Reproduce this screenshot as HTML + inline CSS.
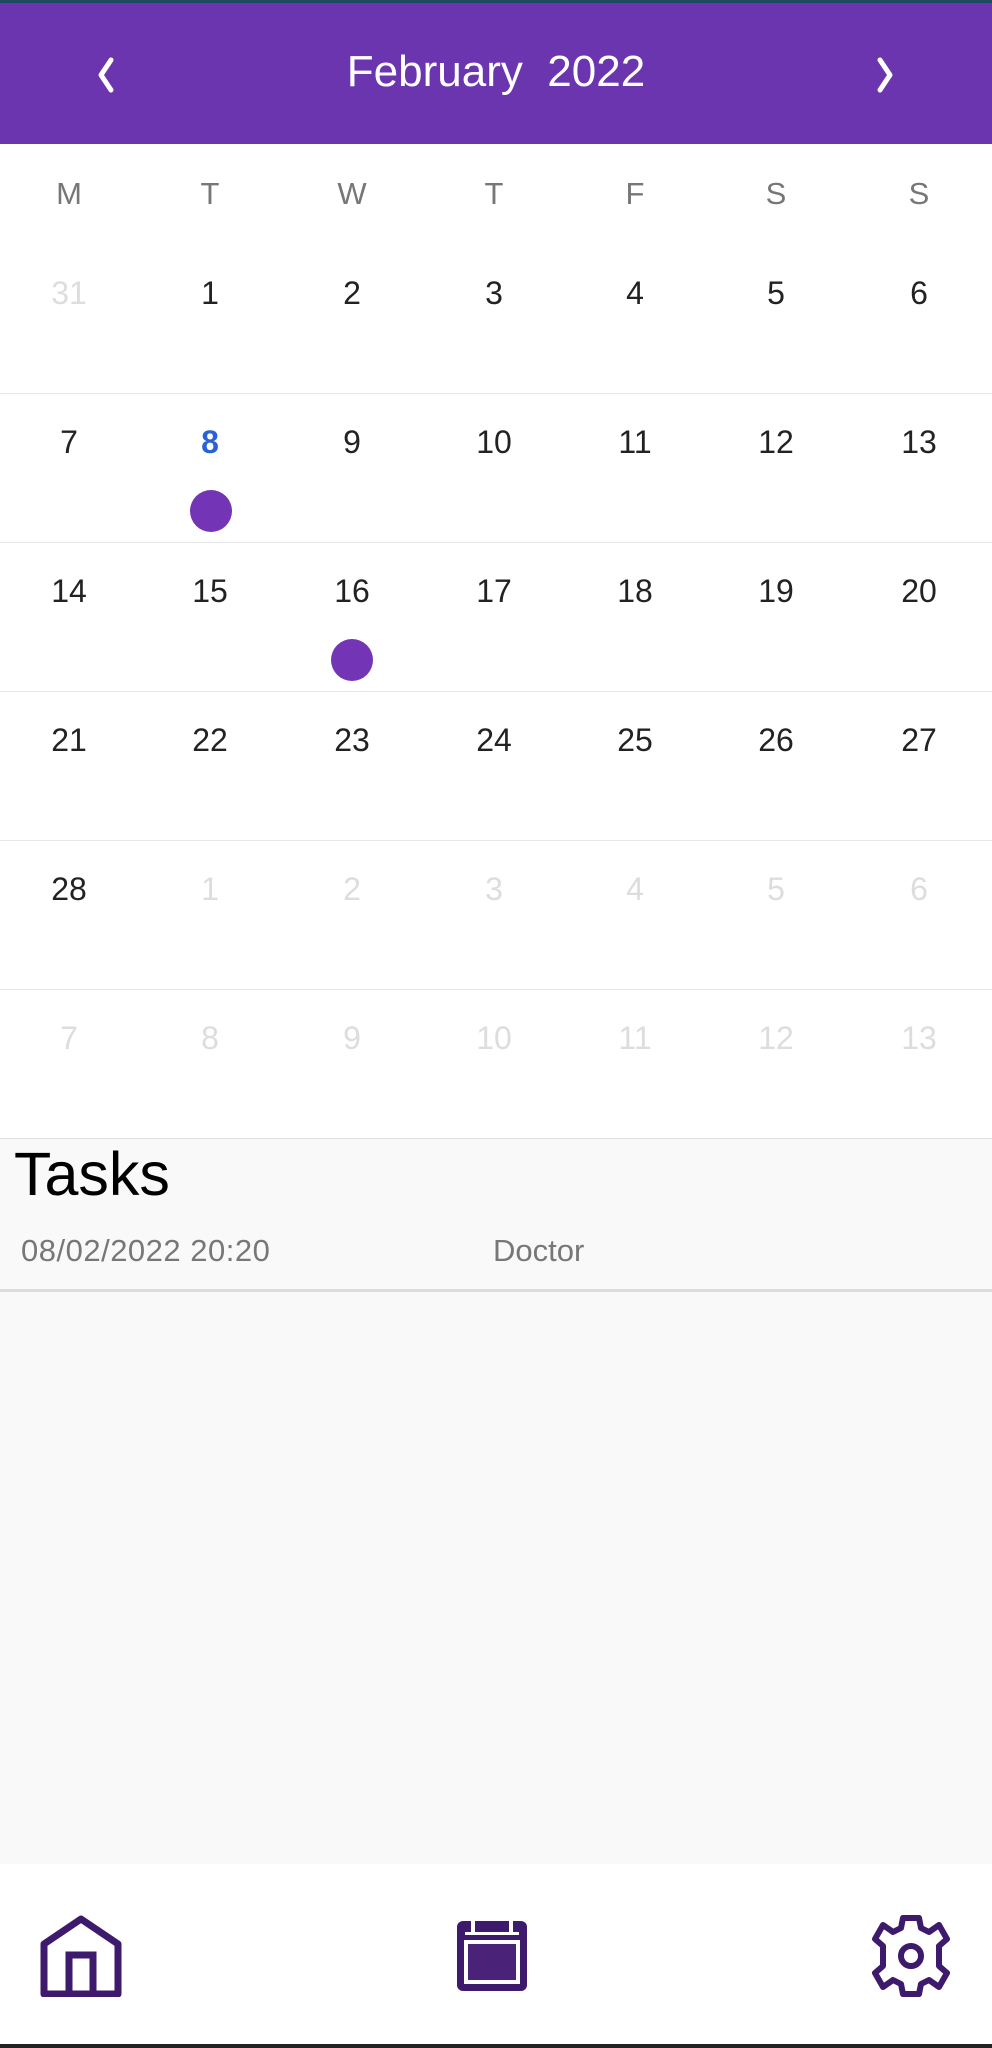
<!DOCTYPE html>
<html><head><meta charset="utf-8"><style>
*{margin:0;padding:0;box-sizing:border-box}
body{width:992px;height:2048px;background:#fff;font-family:"Liberation Sans",sans-serif;position:relative;overflow:hidden}
.top{position:absolute;left:0;top:0;width:992px;height:3px;background:#1c4a5e}
.hdr{position:absolute;left:0;top:3px;width:992px;height:141px;background:#6c35b0}
.title{position:absolute;left:0;width:992px;top:44px;text-align:center;color:#fff;font-size:44px;white-space:pre}
.wd,.num{position:absolute;width:142px;text-align:center;transform:translateX(-71px)}
.wd{top:176px;font-size:31px;color:#777}
.num{font-size:32px;color:#222}
.g{color:#ddd}
.line{position:absolute;left:0;width:992px;height:1px;background:#e6e6e6}
.dot{position:absolute;width:42px;height:42px;border-radius:50%;background:#7335b5}
.tasks{position:absolute;left:0;top:1139px;width:992px;height:725px;background:#f9f9f9}
.nav{position:absolute;left:0;top:1864px;width:992px;height:180px;background:#fff}
.bar{position:absolute;left:0;top:2044px;width:992px;height:4px;background:#222}
</style></head><body>
<div class="top"></div>
<div class="hdr">
<svg style="position:absolute;left:93px;top:52px" width="26" height="40" viewBox="0 0 26 40"><path d="M18 5 L8 20 L18 35" stroke="#fff" stroke-width="5" fill="none" stroke-linecap="round" stroke-linejoin="round"/></svg>
<div class="title">February  2022</div>
<svg style="position:absolute;left:872px;top:52px" width="26" height="40" viewBox="0 0 26 40"><path d="M8 5 L18 20 L8 35" stroke="#fff" stroke-width="5" fill="none" stroke-linecap="round" stroke-linejoin="round"/></svg>
</div>
<div class="wd" style="left:69px">M</div><div class="wd" style="left:210px">T</div><div class="wd" style="left:352px">W</div><div class="wd" style="left:494px">T</div><div class="wd" style="left:635px">F</div><div class="wd" style="left:776px">S</div><div class="wd" style="left:919px">S</div>
<div class="line" style="top:393px"></div><div class="line" style="top:542px"></div><div class="line" style="top:691px"></div><div class="line" style="top:840px"></div><div class="line" style="top:989px"></div><div class="line" style="top:1138px;background:#e0e0e0"></div>
<div class="dot" style="left:190px;top:490px"></div>
<div class="dot" style="left:331px;top:639px"></div>

<div class="num g" style="left:69px;top:275px">31</div><div class="num" style="left:210px;top:275px">1</div><div class="num" style="left:352px;top:275px">2</div><div class="num" style="left:494px;top:275px">3</div><div class="num" style="left:635px;top:275px">4</div><div class="num" style="left:776px;top:275px">5</div><div class="num" style="left:919px;top:275px">6</div>
<div class="num" style="left:69px;top:424px">7</div><div class="num" style="left:210px;top:424px;color:#2a62d6;font-weight:bold">8</div><div class="num" style="left:352px;top:424px">9</div><div class="num" style="left:494px;top:424px">10</div><div class="num" style="left:635px;top:424px">11</div><div class="num" style="left:776px;top:424px">12</div><div class="num" style="left:919px;top:424px">13</div>
<div class="num" style="left:69px;top:573px">14</div><div class="num" style="left:210px;top:573px">15</div><div class="num" style="left:352px;top:573px">16</div><div class="num" style="left:494px;top:573px">17</div><div class="num" style="left:635px;top:573px">18</div><div class="num" style="left:776px;top:573px">19</div><div class="num" style="left:919px;top:573px">20</div>
<div class="num" style="left:69px;top:722px">21</div><div class="num" style="left:210px;top:722px">22</div><div class="num" style="left:352px;top:722px">23</div><div class="num" style="left:494px;top:722px">24</div><div class="num" style="left:635px;top:722px">25</div><div class="num" style="left:776px;top:722px">26</div><div class="num" style="left:919px;top:722px">27</div>
<div class="num" style="left:69px;top:871px">28</div><div class="num g" style="left:210px;top:871px">1</div><div class="num g" style="left:352px;top:871px">2</div><div class="num g" style="left:494px;top:871px">3</div><div class="num g" style="left:635px;top:871px">4</div><div class="num g" style="left:776px;top:871px">5</div><div class="num g" style="left:919px;top:871px">6</div>
<div class="num g" style="left:69px;top:1020px">7</div><div class="num g" style="left:210px;top:1020px">8</div><div class="num g" style="left:352px;top:1020px">9</div><div class="num g" style="left:494px;top:1020px">10</div><div class="num g" style="left:635px;top:1020px">11</div><div class="num g" style="left:776px;top:1020px">12</div><div class="num g" style="left:919px;top:1020px">13</div>

<div class="tasks">
<div style="position:absolute;left:14px;top:0px;font-size:61px;color:#000">Tasks</div>
<div style="position:absolute;left:21px;top:94px;font-size:31px;color:#777;letter-spacing:0.5px">08/02/2022 20:20</div>
<div style="position:absolute;left:493px;top:94px;font-size:31px;color:#777">Doctor</div>
<div style="position:absolute;left:0;top:150px;width:992px;height:3px;background:#dcdcdc"></div>
</div>
<div class="nav">
<svg style="position:absolute;left:40px;top:51px" width="82" height="82" viewBox="0 0 82 82"><path d="M4 79 V29 L41 4 L78 29 V79 Z" fill="none" stroke="#3d1a6b" stroke-width="7" stroke-linejoin="round"/><path d="M29 79 V40 H53 V79" fill="none" stroke="#3d1a6b" stroke-width="7"/></svg>
<svg style="position:absolute;left:454px;top:54px" width="76" height="76" viewBox="0 0 76 76"><rect x="3" y="3" width="70" height="70" rx="6" fill="#3d1a6b"/><rect x="12" y="24" width="52" height="40" fill="#4a2278" stroke="#fff" stroke-width="4"/><path d="M19 3 V16 M57 3 V16" stroke="#fff" stroke-width="4"/><rect x="11" y="14" width="54" height="3" fill="#fff"/></svg>
<svg style="position:absolute;left:871px;top:50px" width="80" height="84" viewBox="-40 -42 80 84"><path d="M-8 -38 H8 L10 -28 L18 -24 L28 -31 L36 -17 L28 -10 V10 L36 17 L28 31 L18 24 L10 28 L8 38 H-8 L-10 28 L-18 24 L-28 31 L-36 17 L-28 10 V-10 L-36 -17 L-28 -31 L-18 -24 L-10 -28 Z" fill="none" stroke="#3d1a6b" stroke-width="6" stroke-linejoin="round"/><circle r="10" fill="none" stroke="#3d1a6b" stroke-width="6"/></svg>
</div>
<div class="bar"></div>
</body></html>
